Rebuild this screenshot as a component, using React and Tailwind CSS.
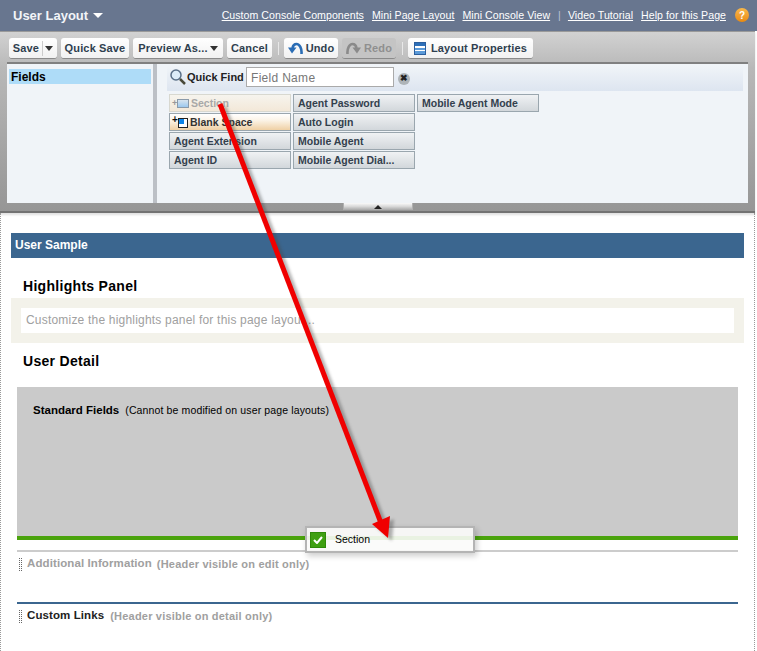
const headerLinks = [
  "Custom Console Components",
  "Mini Page Layout",
  "Mini Console View",
];

const paletteColumns = [
  [
    { label: "Section", kind: "section" },
    { label: "Blank Space", kind: "blank" },
    { label: "Agent Extension" },
    { label: "Agent ID" },
  ],
  [
    { label: "Agent Password" },
    { label: "Auto Login" },
    { label: "Mobile Agent" },
    { label: "Mobile Agent Dial..." },
  ],
  [{ label: "Mobile Agent Mode" }],
];

function ToolButton({ children, disabled, width }) {
  return (
    <div
      className={`h-[21px] flex items-center justify-center rounded-[3px] border-b border-[#8a8a8a] text-[11px] font-bold tracking-[0.15px] ${width} ${
        disabled
          ? "bg-[#c4c4c4] text-[#8f8f8f]"
          : "bg-gradient-to-b from-white to-[#f1f1f1] text-[#2f3f4f]"
      }`}
    >
      {children}
    </div>
  );
}

function Caret() {
  return (
    <span className="inline-block w-0 h-0 border-l-[4px] border-r-[4px] border-t-[5px] border-l-transparent border-r-transparent border-t-[#333]" />
  );
}

function UndoIcon({ flip, fill }) {
  return (
    <svg width="15" height="13" viewBox="0 0 15 13" className={flip ? "-scale-x-100" : ""}>
      <path d="M13.5 12 C14 6.5 11.5 2 8.5 2 C6.5 2 5 3.5 4.5 6" stroke={fill} strokeWidth="2.6" fill="none" />
      <path d="M0 5.5 H8.5 L4 11.5 Z" fill={fill} />
    </svg>
  );
}

function PaletteItem({ label, kind }) {
  if (kind === "section") {
    return (
      <div className="w-[122px] h-[18px] flex items-center pl-[2px] pt-[1px] border border-[#d8d8d0] bg-gradient-to-b from-[#f6f4ee] to-[#f3e8d8] text-[10.5px] font-bold text-[#a8a8a8]">
        <span className="w-[5px] text-[9px] text-[#999] leading-none">+</span>
        <span className="w-[12px] h-[9px] border border-[#8a9aaa] bg-gradient-to-b from-[#d8e4ee] to-[#9cc8ee] mr-[2px]" />
        {label}
      </div>
    );
  }
  if (kind === "blank") {
    return (
      <div className="w-[122px] h-[18px] flex items-center pl-[2px] pt-[1px] border border-[#9aa6ae] bg-gradient-to-b from-white via-[#fbf3e6] via-40% to-[#efd0a4] text-[10.5px] font-bold text-[#333]">
        <span className="w-[6px] text-[10px] text-[#111] leading-none -mt-[5px]">+</span>
        <span className="w-[10px] h-[10px] border border-[#222] bg-white mr-[2px] relative">
          <span className="absolute left-0 top-0 w-[5px] h-[5px] bg-[#0d84e8]" />
        </span>
        {label}
      </div>
    );
  }
  return (
    <div className="w-[122px] h-[18px] flex items-center pl-[4px] pt-[1px] border border-[#9aa6ae] bg-gradient-to-b from-[#f0f2f4] to-[#d2d7db] text-[10.5px] font-bold text-[#33404d] whitespace-nowrap">
      {label}
    </div>
  );
}

function Grip() {
  return (
    <span className="w-[3px] h-[13px] mr-[5px] border-x border-dotted border-[#666]" />
  );
}

export default function App() {
  return (
    <div className="relative w-[757px] h-[651px] overflow-hidden bg-white font-['Liberation_Sans',Arial,sans-serif]">
      {/* Title bar */}
      <div className="h-[31px] bg-[#68768f] flex items-center pl-[13px] pr-[8px] text-white">
        <span className="text-[13px] font-bold text-[#f2f4f8]">User Layout</span>
        <span className="ml-[5px] w-0 h-0 border-l-[5px] border-r-[5px] border-t-[5px] border-l-transparent border-r-transparent border-t-white" />
        <div className="ml-auto flex items-center text-[10.6px] tracking-[0.04px]">
          {headerLinks.map((link) => (
            <span key={link} className="underline mr-[8px]">
              {link}
            </span>
          ))}
          <span className="mr-[7px] text-[#b9c4d6]">|</span>
          <span className="underline mr-[8px]">Video Tutorial</span>
          <span className="underline mr-[9px]">Help for this Page</span>
          <span className="w-[14px] h-[14px] rounded-full bg-gradient-to-b from-[#f9b84a] to-[#e98a0c] text-[10px] font-bold flex items-center justify-center">
            ?
          </span>
        </div>
      </div>

      {/* Layout editor panel */}
      <div className="w-[755px] h-[182px] flex flex-col bg-gradient-to-b from-[#d2d2d2] via-[#b8b8b8] via-20% to-[#969696] border-t border-[#9a9a9a] border-b-[2px] border-b-[#737373] shadow-[0_2px_2px_rgba(0,0,0,0.12)] pt-[6px] px-[7px]">
        <div className="h-[21px] flex items-start gap-[4px] pl-[2px]">
          <ToolButton width="w-[48px]">
            <span className="pr-[3px] border-r border-[#ccc] h-[15px] leading-[15px]">Save</span>
            <span className="pl-[2px] flex"><Caret /></span>
          </ToolButton>
          <ToolButton width="w-[68px]">Quick Save</ToolButton>
          <ToolButton width="w-[90px]">
            Preview As...
            <span className="ml-[2px] flex"><Caret /></span>
          </ToolButton>
          <ToolButton width="w-[45px]">Cancel</ToolButton>
          <span className="w-px h-[13px] mt-[4px] bg-[#e8e8e8] ml-[2px] mr-[1px]" />
          <ToolButton width="w-[54px]">
            <span className="mr-[3px] flex"><UndoIcon fill="#2a6db5" /></span>
            Undo
          </ToolButton>
          <ToolButton disabled width="w-[54px]">
            <span className="mr-[3px] flex"><UndoIcon flip fill="#8a8a8a" /></span>
            Redo
          </ToolButton>
          <span className="w-px h-[13px] mt-[4px] bg-[#e8e8e8] ml-[2px] mr-[1px]" />
          <ToolButton width="w-[125px]">
            <span className="mr-[5px] w-[12px] h-[13px] border border-[#2c5f9e] bg-[linear-gradient(#2c6fb8_0,#2c6fb8_3px,#fff_3px,#fff_5px,#5b9ad8_5px,#5b9ad8_7px,#fff_7px,#fff_8px,#5b9ad8_8px,#5b9ad8_11px)]" />
            Layout Properties
          </ToolButton>
        </div>

        <div className="mt-[3px] flex-1 flex border-t-[2px] border-[#808080] bg-[#f0f4f8]">
          <div className="w-[146px] pt-[5px] pl-[2px] pr-[2px]">
            <div className="h-[15px] pl-[2px] bg-[#aedcf8] text-[12px] font-bold text-black leading-[16px]">
              Fields
            </div>
          </div>
          <div className="w-[4px] bg-[#bcc0c6]" />
          <div className="flex-1 pt-[2px] pl-[10px] pr-[5px]">
            <div className="h-[25px] flex items-center pb-[3px] bg-gradient-to-b from-[#f0f4f8] to-[#dde5f0] pl-[2px]">
              <svg width="18" height="18" viewBox="0 0 18 18">
                <circle cx="7" cy="7" r="5" fill="#dcecf8" stroke="#5a7088" strokeWidth="1.5" />
                <path d="M11 11 L16 16" stroke="#4a4a3a" strokeWidth="2.5" />
              </svg>
              <span className="w-[59px] text-[11px] font-bold text-[#222] whitespace-nowrap">Quick Find</span>
              <div className="w-[148px] h-[20px] border border-[#aaa] bg-white pl-[4px] text-[12px] leading-[20px] text-[#777] tracking-[0.3px]">
                Field Name
              </div>
              <span className="ml-[4px] mt-[3px] w-[12px] h-[12px] rounded-full bg-[#aeb4b8] flex items-center justify-center text-[9px] font-bold text-[#222] leading-none">
                ✖
              </span>
            </div>
            <div className="mt-[3px] ml-[2px] flex gap-[2px]">
              {paletteColumns.map((column, i) => (
                <div key={i} className="flex flex-col gap-[1px]">
                  {column.map((item) => (
                    <PaletteItem key={item.label} {...item} />
                  ))}
                </div>
              ))}
            </div>
          </div>
        </div>

        {/* Collapse handle row */}
        <div className="h-[8px] flex justify-center">
          <div className="w-[70px] h-[7px] bg-gradient-to-b from-[#fafafa] via-[#d8d8d8] to-[#a8a8a8] border-x border-[#b0b0b0] flex items-center justify-center">
            <span className="w-0 h-0 border-l-[4px] border-r-[4px] border-b-[4px] border-l-transparent border-r-transparent border-b-[#222]" />
          </div>
        </div>
      </div>

      {/* Page layout canvas */}
      <div className="h-[438px] mr-[2px] border-x border-dotted border-[#999] pt-[20px] pl-[10px] pr-[10px]">
        <div className="h-[25px] bg-[#3b668f] pl-[4px] text-[12px] font-bold leading-[25px] text-white">
          User Sample
        </div>
        <h2 className="mt-[20px] ml-[12px] text-[14px] font-bold leading-[16px] text-black tracking-[0.3px]">
          Highlights Panel
        </h2>
        <div className="mt-[4px] h-[45px] bg-[#f3f2ea] py-[10px] px-[10px]">
          <div className="h-[25px] bg-white pl-[5px] text-[12px] leading-[25px] text-[#a0a0a0] tracking-[0.2px]">
            Customize the highlights panel for this page layout...
          </div>
        </div>
        <h2 className="mt-[10px] ml-[12px] text-[14px] font-bold leading-[16px] text-black tracking-[0.3px]">
          User Detail
        </h2>
        <div className="mx-[6px]">
          <div className="mt-[18px] h-[149px] bg-[#cacaca] pl-[16px] pt-[16px] text-black leading-[14px] flex items-start">
            <span className="text-[11.5px] font-bold">Standard Fields</span>
            <span className="ml-[6px] text-[10.5px] tracking-[0.13px]">(Cannot be modified on user page layouts)</span>
          </div>
          <div className="h-[4px] bg-[#4aa30c]" />
          <div className="mt-[10px] h-[2px] bg-[#ccc]" />
          <div className="mt-[4px] h-[16px] flex items-center pl-[2px] text-[#a0a0a0] font-bold">
            <Grip />
            <span className="text-[11.5px] tracking-[0.1px]">Additional Information</span>
            <span className="ml-[5px] text-[11px] tracking-[0.2px]">(Header visible on edit only)</span>
          </div>
          <div className="mt-[30px] h-[2px] bg-[#3b668f]" />
          <div className="mt-[4px] h-[16px] flex items-center pl-[2px] font-bold text-[#a0a0a0]">
            <Grip />
            <span className="text-[11.5px] text-[#222] tracking-[0.1px]">Custom Links</span>
            <span className="ml-[6px] text-[11px] tracking-[0.2px]">(Header visible on detail only)</span>
          </div>
        </div>
      </div>

      {/* Dragged item */}
      <div className="absolute left-[305px] top-[526px] w-[170px] h-[27px] flex items-center pl-[3px] bg-[#fbfbf9]/90 border-2 border-[#b4b4b4] shadow-[2px_3px_6px_rgba(0,0,0,0.2)] text-[10.5px] text-black">
        <span className="w-[16px] h-[16px] bg-[#3fa012] border border-[#2f8a0a] flex items-center justify-center mr-[9px]">
          <svg width="10" height="8" viewBox="0 0 10 8">
            <path d="M1 4 L4 7 L9 1" stroke="#fff" strokeWidth="2" fill="none" />
          </svg>
        </span>
        Section
      </div>

      {/* Red annotation arrow */}
      <svg className="absolute left-0 top-0 pointer-events-none" width="757" height="651" viewBox="0 0 757 651">
        <g opacity="0.4" transform="translate(4 3)" className="blur-[1.5px]">
          <line x1="220" y1="104" x2="381" y2="523" stroke="#444" strokeWidth="5" />
          <path d="M372 524 L390 516 L388 538 Z" fill="#444" />
        </g>
        <line x1="220" y1="104" x2="381" y2="523" stroke="#f00000" strokeWidth="5" />
        <path d="M372 524 L390 516 L388 538 Z" fill="#f00000" />
      </svg>
    </div>
  );
}
